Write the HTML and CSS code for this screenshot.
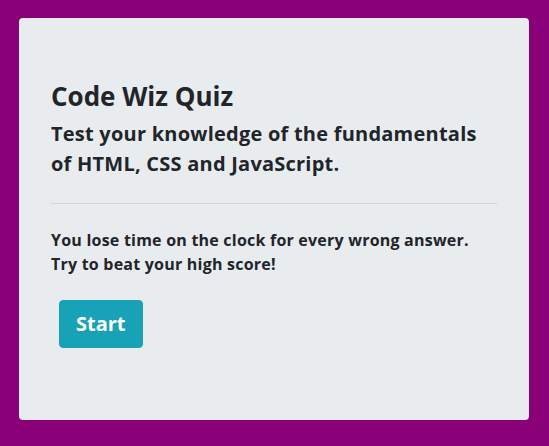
FILE: index.html
```html
<!DOCTYPE html>
<html lang="en">
<head>
<meta charset="utf-8">
<title>Code Wiz Quiz</title>
<link rel="stylesheet" href="styles.css">
</head>
<body>
<main class="page">
  <section class="jumbotron">
    <h1 class="title">Code Wiz Quiz</h1>
    <p class="lead">Test your knowledge of the fundamentals<br>of HTML, CSS and JavaScript.</p>
    <hr class="rule">
    <p class="info">You lose time on the clock for every wrong answer.<br>Try to beat your high score!</p>
    <button class="btn-start" type="button">Start</button>
  </section>
</main>
</body>
</html>
```
FILE: styles.css
```css
html, body {
  margin: 0;
  padding: 0;
}
body {
  background: #8a0079;
  font-family: "Open Sans", "Liberation Sans", sans-serif;
  color: #212529;
  height: 446px;
  overflow: hidden;
}
.page {
  padding: 18px 20px 0 19px;
}
.jumbotron {
  background: #e9ecef;
  border-radius: 4px;
  padding: 64px 32px;
  height: 402px;
  box-sizing: border-box;
}
.title {
  margin: 0 0 8px;
  font-size: 26px;
  line-height: 29px;
  font-weight: 700;
}
.lead {
  margin: 0;
  font-size: 20px;
  line-height: 30px;
  font-weight: 700;
  letter-spacing: 0.23px;
  white-space: nowrap;
}
.rule {
  margin: 24px 0;
  border: 0;
  border-top: 1px solid rgba(0, 0, 0, 0.1);
}
.info {
  margin: 0 0 16px;
  font-size: 16px;
  line-height: 24px;
  font-weight: 700;
  letter-spacing: 0.22px;
  white-space: nowrap;
}
.btn-start {
  margin: 8px;
  height: 48px;
  padding: 0 16px;
  border: 1px solid #17a2b8;
  border-radius: 4px;
  background: #17a2b8;
  color: #fff;
  font-family: inherit;
  font-size: 20px;
  font-weight: 700;
  line-height: 30px;
}
```
